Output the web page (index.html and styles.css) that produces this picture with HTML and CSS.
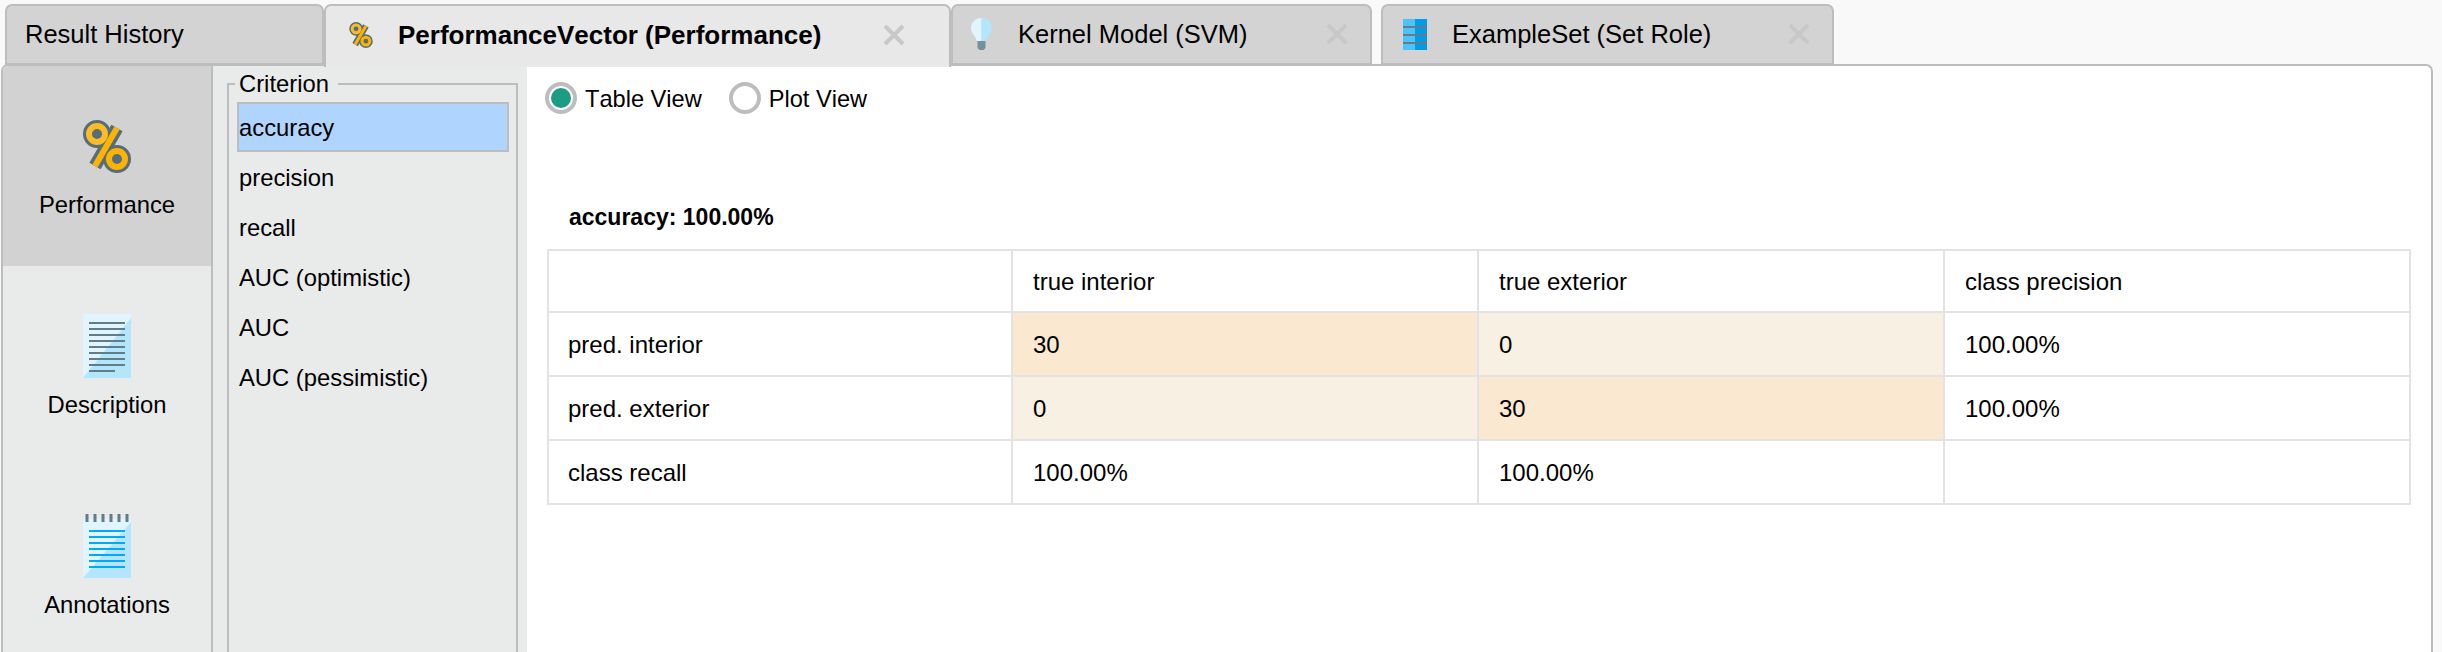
FILE: index.html
```html
<!DOCTYPE html>
<html lang="en">
<head>
    <meta charset="UTF-8">
    <title>PerformanceVector (Performance)</title>
    <link rel="stylesheet" href="styles.css">
</head>
<body>
    <div class="tabs">
        <div class="tab tab-history"><span class="tab-title">Result History</span></div>
        <div class="tab tab-perf active">
            <svg class="tab-icon" width="24" height="26" viewBox="0 0 48 53">
                <path d="M34 8L12 46" stroke="#546e7a" stroke-width="13" fill="none"/>
                <circle cx="14" cy="14" r="9.5" stroke="#546e7a" stroke-width="9" fill="#546e7a"/>
                <circle cx="34" cy="39" r="9.5" stroke="#546e7a" stroke-width="9" fill="#546e7a"/>
                <path d="M34 8L12 46" stroke="#ffb300" stroke-width="6" fill="none"/>
                <circle cx="14" cy="14" r="8" stroke="#fdbb28" stroke-width="6" fill="#546e7a"/>
                <circle cx="34" cy="39" r="8" stroke="#ffb300" stroke-width="6" fill="#546e7a"/>
            </svg>
            <span class="tab-title">PerformanceVector (Performance)</span>
            <svg class="tab-close" width="22" height="22" viewBox="0 0 22 22"><path d="M2 2L20 20M20 2L2 20"/></svg>
        </div>
        <div class="tab tab-kernel">
            <svg class="tab-icon" width="21" height="32" viewBox="0 0 21 32">
                <path d="M10.5 0C4 0 0 5 0 10C0 15 4 17 6 23H10.5Z" fill="#e1f5fe"/>
                <path d="M10.5 0C17 0 21 5 21 10C21 15 17 17 15 23H10.5Z" fill="#b3e5fc"/>
                <path d="M6.5 23H14.5V30L12.5 32H8.5L6.5 30Z" fill="#78909c"/>
            </svg>
            <span class="tab-title">Kernel Model (SVM)</span>
            <svg class="tab-close" width="22" height="22" viewBox="0 0 22 22"><path d="M2 2L20 20M20 2L2 20"/></svg>
        </div>
        <div class="tab tab-example">
            <svg class="tab-icon" width="24" height="31" viewBox="0 0 24 31">
                <rect width="12" height="31" fill="#4fc3f7"/>
                <rect x="12" width="12" height="31" fill="#039be5"/>
                <rect y="7" width="24" height="2" fill="#607d8b"/>
                <rect y="15" width="24" height="2" fill="#607d8b"/>
                <rect y="23" width="24" height="2" fill="#607d8b"/>
            </svg>
            <span class="tab-title">ExampleSet (Set Role)</span>
            <svg class="tab-close" width="22" height="22" viewBox="0 0 22 22"><path d="M2 2L20 20M20 2L2 20"/></svg>
        </div>
    </div>

    <div class="panel">
        <div class="sidebar">
            <div class="side-item selected">
                <div class="side-icon">
                    <svg width="48" height="53" viewBox="0 0 48 53">
                        <path d="M34 8L12 46" stroke="#546e7a" stroke-width="13" fill="none"/>
                        <circle cx="14" cy="14" r="9.5" stroke="#546e7a" stroke-width="9" fill="#546e7a"/>
                        <circle cx="34" cy="39" r="9.5" stroke="#546e7a" stroke-width="9" fill="#546e7a"/>
                        <path d="M34 8L12 46" stroke="#ffb300" stroke-width="6" fill="none"/>
                        <circle cx="14" cy="14" r="8" stroke="#fdbb28" stroke-width="6" fill="#546e7a"/>
                        <circle cx="34" cy="39" r="8" stroke="#ffb300" stroke-width="6" fill="#546e7a"/>
                    </svg>
                </div>
                <div class="side-label">Performance</div>
            </div>
            <div class="side-item">
                <div class="side-icon">
                    <svg width="48" height="64" viewBox="0 0 48 64">
                        <rect width="48" height="64" fill="#b3e5fc"/>
                        <path d="M0 0H48V4L0 64Z" fill="#e1f5fe"/>
                        <path d="M6 9H42M6 15H42M6 21H42M6 27H42M6 33H42M6 39H42M6 45H42M6 51H42M6 57H32" stroke="#607d8b" stroke-width="2"/>
                    </svg>
                </div>
                <div class="side-label">Description</div>
            </div>
            <div class="side-item">
                <div class="side-icon">
                    <svg width="48" height="64" viewBox="0 0 48 64">
                        <rect y="5" width="48" height="59" fill="#b3e5fc"/>
                        <path d="M0 5H48V8L0 64Z" fill="#e1f5fe"/>
                        <path d="M4 0V8M12 0V8M20 0V8M28 0V8M36 0V8M44 0V8" stroke="#607d8b" stroke-width="3"/>
                        <path d="M6 17H42M6 23H42M6 29H42M6 35H42M6 41H42M6 47H42M6 53H42" stroke="#03a9f4" stroke-width="2"/>
                    </svg>
                </div>
                <div class="side-label">Annotations</div>
            </div>
        </div>

        <div class="criteria">
            <fieldset class="criteria-group">
                <legend>Criterion</legend>
                <div class="criterion current">accuracy</div>
                <div class="criterion">precision</div>
                <div class="criterion">recall</div>
                <div class="criterion">AUC (optimistic)</div>
                <div class="criterion">AUC</div>
                <div class="criterion">AUC (pessimistic)</div>
            </fieldset>
        </div>

        <div class="content">
            <div class="views">
                <span class="radio checked"></span><span class="radio-label">Table View</span>
                <span class="radio"></span><span class="radio-label">Plot View</span>
            </div>
            <div class="result-title">accuracy: 100.00%</div>
            <table class="matrix">
                <colgroup>
                    <col class="label-col">
                    <col>
                    <col>
                    <col>
                </colgroup>
                <tr class="head-row">
                    <td></td>
                    <td>true interior</td>
                    <td>true exterior</td>
                    <td>class precision</td>
                </tr>
                <tr>
                    <td>pred. interior</td>
                    <td class="hit">30</td>
                    <td class="miss">0</td>
                    <td>100.00%</td>
                </tr>
                <tr>
                    <td>pred. exterior</td>
                    <td class="miss">0</td>
                    <td class="hit">30</td>
                    <td>100.00%</td>
                </tr>
                <tr>
                    <td>class recall</td>
                    <td>100.00%</td>
                    <td>100.00%</td>
                    <td></td>
                </tr>
            </table>
        </div>
    </div>
</body>
</html>
```

FILE: styles.css
```css
html, body {
    height: 100%;
}
body {
    margin: 0;
    overflow: hidden;
    display: flex;
    flex-direction: column;
    background-color: #f9f9f9;
    color: #000;
    font-family: "Liberation Sans", Arial, sans-serif;
    font-size: 23.8px;
    font-kerning: none;
}

/* tabs */
.tabs {
    display: flex;
    height: 60px;
    padding: 4px 0 0 5px;
    flex-shrink: 0;
    position: relative;
    z-index: 1;
}
.tab {
    display: flex;
    align-items: center;
    box-sizing: border-box;
    height: 61px;
    padding-bottom: 1px;
    background-color: #d3d3d3;
    border: 2px solid #bdbdbd;
    border-radius: 7px 7px 0 0;
    font-size: 25.5px;
}
.tab-history {
    width: 319px;
    padding-left: 18px;
}
.tab-perf {
    width: 627px;
    padding-left: 23px;
}
.tab-kernel {
    width: 421px;
    padding-left: 18px;
}
.tab-example {
    width: 453px;
    margin-left: 9px;
    padding-left: 20px;
}
.tab.active {
    height: 63px;
    padding-bottom: 3px;
    background-color: #e8e8e8;
    border-bottom: none;
}
.tab-title {
    white-space: nowrap;
}
.active .tab-title {
    font-size: 26px;
    font-weight: bold;
    margin-left: 25px;
}
.tab-kernel .tab-title {
    margin-left: 26px;
}
.tab-example .tab-title {
    margin-left: 25px;
}
.tab-close {
    margin-left: auto;
    fill: none;
    stroke: #c8c8c8;
    stroke-width: 4;
}
.tab-perf .tab-close {
    margin-right: 44px;
}
.tab-kernel .tab-close {
    margin-right: 22px;
}
.tab-example .tab-close {
    margin-right: 22px;
}

/* panel */
.panel {
    flex: 1;
    display: flex;
    min-height: 0;
    margin: 0 9px 0 1px;
    border: 2px solid #bdbdbd;
    border-bottom: none;
    border-radius: 7px 7px 0 0;
    overflow: hidden;
    background-color: #fff;
}
.sidebar {
    width: 208px;
    flex-shrink: 0;
    background-color: #e9ebea;
    border-right: 2px solid #bdbdbd;
}
.side-item {
    box-sizing: border-box;
    height: 200px;
    padding-top: 48px;
    text-align: center;
}
.side-item.selected {
    background-color: #d1d2d1;
}
.side-icon {
    display: flex;
    align-items: center;
    justify-content: center;
    height: 64px;
}
.side-label {
    margin-top: 13px;
    line-height: 27px;
}

.criteria {
    width: 314px;
    flex-shrink: 0;
    box-sizing: border-box;
    padding: 4px 9px 0 14px;
    background-color: #e9ebea;
}
.criteria-group {
    box-sizing: border-box;
    height: 700px;
    margin: 0;
    padding: 5px 7px 0 8px;
    border: 2px solid #bdbdbd;
}
.criteria-group legend {
    margin-left: -2px;
    padding: 0 9px 0 4px;
    line-height: 27px;
}
.criterion {
    display: flex;
    align-items: center;
    box-sizing: border-box;
    height: 50px;
    padding-top: 2px;
    border: 2px solid transparent;
}
.criterion.current {
    background-color: #afd5fe;
    border-color: #bdbdbd;
}

.content {
    flex: 1;
    padding: 16px 20px 0;
}
.views {
    display: flex;
    align-items: center;
    margin-left: -2px;
}
.radio {
    display: flex;
    align-items: center;
    justify-content: center;
    box-sizing: border-box;
    width: 32px;
    height: 32px;
    border: 4px solid #bdbdbd;
    border-radius: 50%;
    background-color: #fff;
}
.radio.checked::after {
    content: "";
    width: 20px;
    height: 20px;
    border-radius: 50%;
    background-color: #1c9d82;
}
.radio-label {
    margin: 2px 27px 0 8px;
    font-size: 23.6px;
}
.result-title {
    margin: 90px 0 18px 22px;
    font-size: 23px;
    font-weight: bold;
    line-height: 27px;
}
.matrix {
    width: 100%;
    table-layout: fixed;
    border-collapse: collapse;
    font-size: 24px;
}
.label-col {
    width: 464px;
}
.matrix td {
    height: 60px;
    padding: 2px 0 0 20px;
    border: 2px solid #e3e3e3;
}
.matrix td:first-child {
    padding-left: 19px;
}
.matrix .head-row td {
    height: 58px;
}
.matrix .hit {
    background-color: #fae8d0;
}
.matrix .miss {
    background-color: #f8f0e3;
}
```
